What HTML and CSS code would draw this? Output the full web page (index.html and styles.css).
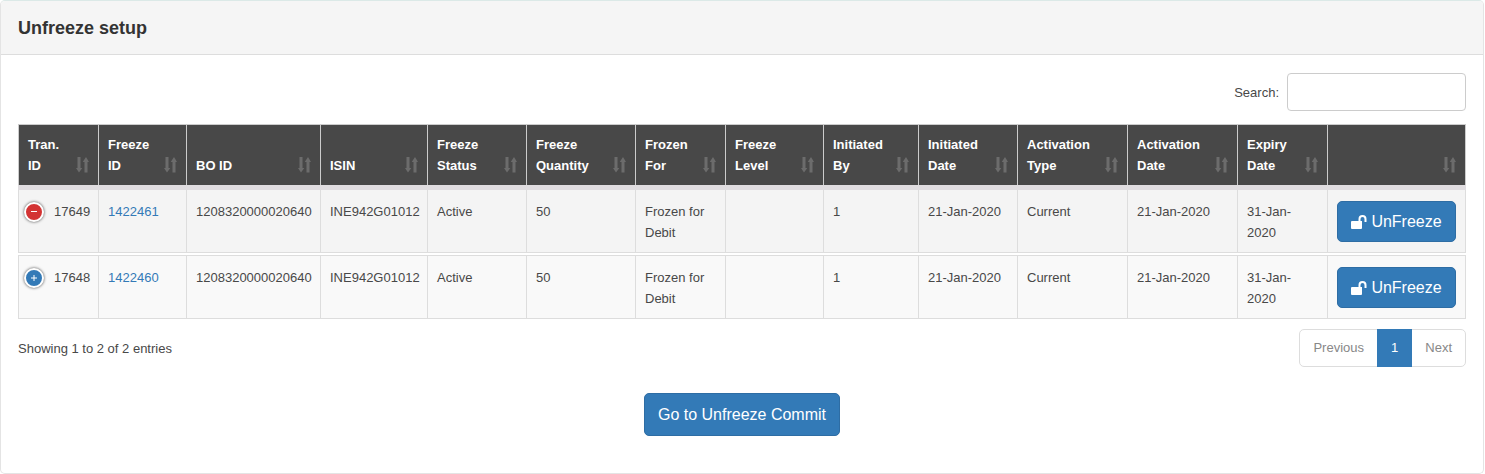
FILE: index.html
```html
<!DOCTYPE html>
<html lang="en">
<head>
    <meta charset="UTF-8">
    <meta name="viewport" content="width=device-width, initial-scale=1.0">
    <title>Unfreeze setup</title>
    <link rel="stylesheet" href="styles.css">
</head>
<body>

    <!-- Shared icons -->
    <svg class="icon-defs" aria-hidden="true">
        <symbol id="icon-sort" viewBox="0 0 13 16">
            <path d="M1.500 0h3v11H6.300L3 15.500 0 11h1.500zM8.500 15.500h3V5H13L10 0 6.700 5h1.800z"/>
        </symbol>
        <symbol id="icon-unlock" viewBox="0 0 16 14">
            <path d="M1 6h10v7a1 1 0 0 1-1 1H1a1 1 0 0 1-1-1V7a1 1 0 0 1 1-1z"/>
            <path d="M8.500 7V4a3 3 0 0 1 6 0v3" fill="none" stroke="currentColor" stroke-width="2"/>
        </symbol>
    </svg>

    <div class="panel">
        <div class="panel-heading">
            <h1>Unfreeze setup</h1>
        </div>

        <div class="panel-body">
            <div class="table-filter">
                <label for="search">Search:</label>
                <input type="search" id="search" name="search">
            </div>

            <table class="data-table">
                <colgroup>
                    <col class="col-tran">
                    <col class="col-freeze">
                    <col class="col-bo">
                    <col class="col-isin">
                    <col class="col-medium">
                    <col class="col-quantity">
                    <col class="col-small">
                    <col class="col-level">
                    <col class="col-by">
                    <col class="col-medium">
                    <col class="col-wide">
                    <col class="col-wide">
                    <col class="col-small">
                    <col class="col-action">
                </colgroup>
                <thead>
                    <tr>
                        <th><button class="sort">Tran.<br>ID <svg><use href="#icon-sort"/></svg></button></th>
                        <th><button class="sort">Freeze<br>ID <svg><use href="#icon-sort"/></svg></button></th>
                        <th><button class="sort">BO ID <svg><use href="#icon-sort"/></svg></button></th>
                        <th><button class="sort">ISIN <svg><use href="#icon-sort"/></svg></button></th>
                        <th><button class="sort">Freeze<br>Status <svg><use href="#icon-sort"/></svg></button></th>
                        <th><button class="sort">Freeze<br>Quantity <svg><use href="#icon-sort"/></svg></button></th>
                        <th><button class="sort">Frozen<br>For <svg><use href="#icon-sort"/></svg></button></th>
                        <th><button class="sort">Freeze<br>Level <svg><use href="#icon-sort"/></svg></button></th>
                        <th><button class="sort">Initiated<br>By <svg><use href="#icon-sort"/></svg></button></th>
                        <th><button class="sort">Initiated<br>Date <svg><use href="#icon-sort"/></svg></button></th>
                        <th><button class="sort">Activation<br>Type <svg><use href="#icon-sort"/></svg></button></th>
                        <th><button class="sort">Activation<br>Date <svg><use href="#icon-sort"/></svg></button></th>
                        <th><button class="sort">Expiry<br>Date <svg><use href="#icon-sort"/></svg></button></th>
                        <th><button class="sort" aria-label="Action"><svg><use href="#icon-sort"/></svg></button></th>
                    </tr>
                </thead>
                <tbody>
                    <tr class="odd">
                        <td class="control">
                            <div class="control-inner">
                                <button class="toggle toggle-open" aria-label="Hide details">
                                    <svg viewBox="0 0 16 16"><path d="M5 7.500h6"/></svg>
                                </button>
                                17649
                            </div>
                        </td>
                        <td><a href="#1422461">1422461</a></td>
                        <td>1208320000020640</td>
                        <td>INE942G01012</td>
                        <td>Active</td>
                        <td>50</td>
                        <td>Frozen for Debit</td>
                        <td></td>
                        <td>1</td>
                        <td>21-Jan-2020</td>
                        <td>Current</td>
                        <td>21-Jan-2020</td>
                        <td>31-Jan-<br>2020</td>
                        <td><button class="btn btn-row"><svg><use href="#icon-unlock"/></svg>UnFreeze</button></td>
                    </tr>
                    <tr class="even">
                        <td class="control">
                            <div class="control-inner">
                                <button class="toggle" aria-label="Show details">
                                    <svg viewBox="0 0 16 16"><path d="M5 8h6M8 5v6"/></svg>
                                </button>
                                17648
                            </div>
                        </td>
                        <td><a href="#1422460">1422460</a></td>
                        <td>1208320000020640</td>
                        <td>INE942G01012</td>
                        <td>Active</td>
                        <td>50</td>
                        <td>Frozen for Debit</td>
                        <td></td>
                        <td>1</td>
                        <td>21-Jan-2020</td>
                        <td>Current</td>
                        <td>21-Jan-2020</td>
                        <td>31-Jan-<br>2020</td>
                        <td><button class="btn btn-row"><svg><use href="#icon-unlock"/></svg>UnFreeze</button></td>
                    </tr>
                </tbody>
            </table>

            <div class="table-footer">
                <div class="table-info">Showing 1 to 2 of 2 entries</div>
                <nav class="pagination" aria-label="Pages">
                    <a href="#previous">Previous</a>
                    <a href="#page-1" class="active">1</a>
                    <a href="#next">Next</a>
                </nav>
            </div>

            <div class="actions">
                <button class="btn">Go to Unfreeze Commit</button>
            </div>
        </div>
    </div>

</body>
</html>
```
FILE: styles.css
```css
* {
    box-sizing: border-box;
}
body {
    margin: 0;
    font-family: "Liberation Sans", Arial, sans-serif;
    font-size: 13px;
    line-height: 21px;
    color: #484848;
    background-color: #fff;
}
button,
input {
    font-family: inherit;
}
a {
    color: #337ab7;
    text-decoration: none;
}
.icon-defs {
    display: none;
}

/* Panel */
.panel {
    margin-right: 1px;
    border: 1px solid #e4e4e4;
    border-top-color: #dbe9e7;
    border-radius: 5px;
}
.panel-heading {
    padding: 17px 17px 15px;
    background-color: #f5f5f5;
    border-bottom: 1px solid #ddd;
    border-radius: 4px 4px 0 0;
}
.panel-heading h1 {
    margin: 0;
    font-size: 18px;
    line-height: 21px;
    color: #333;
}
.panel-body {
    padding: 18px 17px 37px;
}

/* Search box */
.table-filter {
    display: flex;
    align-items: center;
    justify-content: flex-end;
    gap: 8px;
    margin-bottom: 13px;
}
.table-filter input {
    width: 179px;
    height: 38px;
    padding: 6px 12px;
    border: 1px solid #ccc;
    border-radius: 4px;
    font-size: 13px;
    background-color: #fff;
    appearance: none;
}

/* Table */
.data-table {
    width: 100%;
    table-layout: fixed;
    border-collapse: collapse;
}
.col-tran { width: 80px; }
.col-freeze { width: 88px; }
.col-bo { width: 134px; }
.col-isin { width: 107px; }
.col-small { width: 90px; }
.col-by { width: 95px; }
.col-level { width: 98px; }
.col-medium { width: 99px; }
.col-quantity { width: 109px; }
.col-wide { width: 110px; }
.col-action { width: 138px; }

.data-table th {
    padding: 9px;
    vertical-align: bottom;
    background-color: #484848;
    border: 1px solid #ccc;
    border-bottom: 5px solid #e0dde0;
}
.data-table td {
    padding: 11px 9px 9px;
    vertical-align: top;
    border: 1px solid #ddd;
    background-clip: padding-box;
}
.odd td {
    background-color: #f4f4f4;
}
.even td {
    background-color: #f9f9f9;
    border-top: 4px double #ddd;
}
.sort {
    display: block;
    position: relative;
    width: 100%;
    min-height: 21px;
    padding: 0;
    border: none;
    background: none;
    font-size: 13px;
    font-weight: bold;
    line-height: 21px;
    text-align: left;
    color: #fff;
    cursor: pointer;
}
.sort svg {
    position: absolute;
    right: 0;
    bottom: 3px;
    width: 13px;
    height: 16px;
    fill: #6c6c6c;
}

/* Row expand control */
.data-table .control {
    padding-left: 5px;
}
.control-inner {
    display: flex;
    align-items: center;
    gap: 10px;
}
.toggle {
    flex: none;
    width: 20px;
    height: 20px;
    padding: 0;
    border: 2px solid #fff;
    border-radius: 50%;
    background-color: #337ab7;
    box-shadow: 0 0 3px #444;
    cursor: pointer;
}
.toggle svg {
    display: block;
    width: 16px;
    height: 16px;
    stroke: #fff;
}
.toggle-open {
    background-color: #d33333;
}

/* Buttons */
.btn {
    padding: 0 13px;
    height: 43px;
    border: 1px solid #2e6da4;
    border-radius: 5px;
    background-color: #337ab7;
    font-size: 16px;
    color: #fff;
    cursor: pointer;
}
.btn:hover {
    background-color: #286090;
}
.btn-row {
    display: flex;
    align-items: center;
    justify-content: center;
    gap: 4px;
    width: 100%;
    height: 41px;
    padding: 0;
}
.btn-row svg {
    width: 16px;
    height: 14px;
    fill: currentColor;
}

/* Footer */
.table-footer {
    display: flex;
    align-items: center;
    justify-content: space-between;
    margin-top: 10px;
}
.pagination {
    display: flex;
    border: 1px solid #ddd;
    border-radius: 5px;
}
.pagination a {
    padding: 8px 13px;
    line-height: 20px;
    color: #888;
}
.pagination .active {
    margin: -1px 0;
    padding: 9px 14px;
    background-color: #337ab7;
    color: #fff;
}
.actions {
    margin-top: 26px;
    text-align: center;
}
```
